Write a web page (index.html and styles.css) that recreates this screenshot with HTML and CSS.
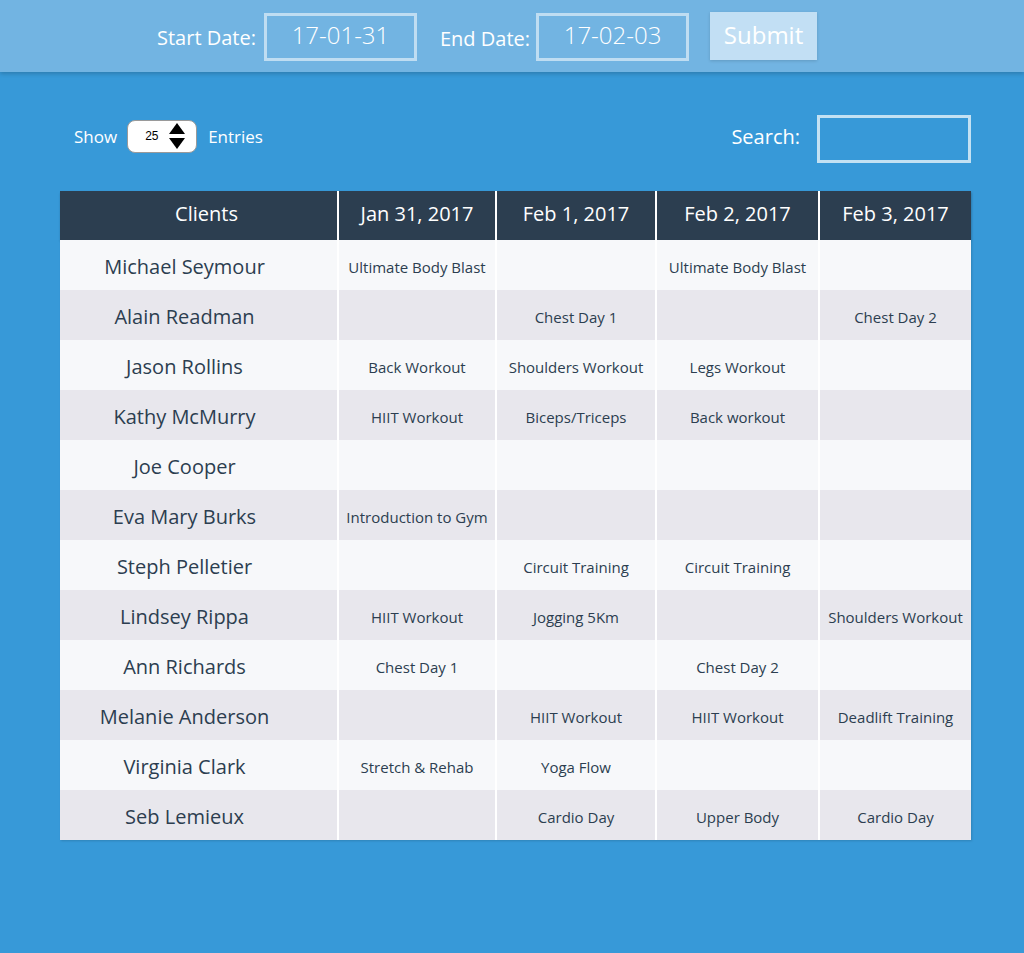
FILE: index.html
```html
<!DOCTYPE html>
<html>
<head>
<meta charset="utf-8">
<link rel="stylesheet" href="styles.css">
</head>
<body>
<header class="topbar">
  <label class="field-label">Start Date:</label>
  <div class="date-box">17-01-31</div>
  <label class="field-label end">End Date:</label>
  <div class="date-box">17-02-03</div>
  <button class="submit">Submit</button>
</header>
<main class="content">
  <div class="controls">
    <div class="show">
      <span>Show</span>
      <div class="select"><span class="num">25</span>
        <svg class="spin" width="16" height="26" viewBox="0 0 16 26"><polygon points="8,0 16,11 0,11" fill="#000"/><polygon points="0,15 16,15 8,26" fill="#000"/></svg>
      </div>
      <span>Entries</span>
    </div>
    <div class="search">
      <span class="search-label">Search:</span>
      <div class="search-box"></div>
    </div>
  </div>
  <table class="grid">
    <colgroup>
      <col class="w0"><col class="w1"><col class="w2"><col class="w3"><col class="w4">
    </colgroup>
    <thead>
      <tr><th class="c0">Clients</th><th>Jan 31, 2017</th><th>Feb 1, 2017</th><th>Feb 2, 2017</th><th>Feb 3, 2017</th></tr>
    </thead>
    <tbody>
      <tr><td class="name">Michael Seymour</td><td>Ultimate Body Blast</td><td></td><td>Ultimate Body Blast</td><td></td></tr>
      <tr><td class="name">Alain Readman</td><td></td><td>Chest Day 1</td><td></td><td>Chest Day 2</td></tr>
      <tr><td class="name">Jason Rollins</td><td>Back Workout</td><td>Shoulders Workout</td><td>Legs Workout</td><td></td></tr>
      <tr><td class="name">Kathy McMurry</td><td>HIIT Workout</td><td>Biceps/Triceps</td><td>Back workout</td><td></td></tr>
      <tr><td class="name">Joe Cooper</td><td></td><td></td><td></td><td></td></tr>
      <tr><td class="name">Eva Mary Burks</td><td>Introduction to Gym</td><td></td><td></td><td></td></tr>
      <tr><td class="name">Steph Pelletier</td><td></td><td>Circuit Training</td><td>Circuit Training</td><td></td></tr>
      <tr><td class="name">Lindsey Rippa</td><td>HIIT Workout</td><td>Jogging 5Km</td><td></td><td>Shoulders Workout</td></tr>
      <tr><td class="name">Ann Richards</td><td>Chest Day 1</td><td></td><td>Chest Day 2</td><td></td></tr>
      <tr><td class="name">Melanie Anderson</td><td></td><td>HIIT Workout</td><td>HIIT Workout</td><td>Deadlift Training</td></tr>
      <tr><td class="name">Virginia Clark</td><td>Stretch &amp; Rehab</td><td>Yoga Flow</td><td></td><td></td></tr>
      <tr><td class="name">Seb Lemieux</td><td></td><td>Cardio Day</td><td>Upper Body</td><td>Cardio Day</td></tr>
    </tbody>
  </table>
</main>
</body>
</html>
```
FILE: styles.css
```css
html, body {
  margin: 0;
  padding: 0;
}
body {
  background: #3799d8;
  font-family: "Open Sans", "Liberation Sans", sans-serif;
  width: 1024px;
  height: 953px;
  overflow: hidden;
}
.topbar {
  height: 72px;
  background: #72b4e2;
  box-shadow: 0 2px 4px rgba(0,0,0,0.18);
  display: flex;
  align-items: center;
  padding-left: 157px;
  box-sizing: border-box;
  position: relative;
}
.field-label {
  color: #fff;
  font-size: 20px;
  margin-right: 8px;
  padding-top: 2px;
}
.field-label.end {
  margin-left: 23px;
  margin-right: 6px;
  padding-top: 4px;
}
.date-box {
  width: 153px;
  height: 48px;
  box-sizing: border-box;
  border: 3px solid rgba(255,255,255,0.55);
  color: #fff;
  font-size: 24px;
  font-weight: 300;
  display: flex;
  align-items: center;
  justify-content: center;
  margin-top: 1px;
  padding-bottom: 4px;
}
.submit {
  margin-left: 21px;
  width: 107px;
  height: 48px;
  background: #c2dff4;
  border: none;
  color: #fff;
  font-family: inherit;
  font-size: 24px;
  box-shadow: 0 1px 3px rgba(0,0,0,0.15);
  margin-top: -1px;
  padding: 0 0 2px 0;
}
.content {
  padding: 43px 53px 0 60px;
}
.controls {
  display: flex;
  justify-content: space-between;
  align-items: center;
  height: 48px;
  padding-left: 14px;
}
.show {
  display: flex;
  align-items: center;
  color: #fff;
  font-size: 17px;
  margin-top: -6px;
}
.select {
  width: 70px;
  height: 33px;
  box-sizing: border-box;
  background: #fff;
  border: 1px solid #9a9a9a;
  border-radius: 8px;
  margin: 0 11px 0 10px;
  display: flex;
  align-items: center;
  padding-left: 17px;
}
.num {
  color: #000;
  font-size: 12px;
  font-family: "Liberation Sans", sans-serif;
  margin-right: 10px;
}
.spin {
  display: block;
}
.search {
  display: flex;
  align-items: center;
  color: #fff;
  font-size: 20px;
}
.search-label {
  padding-bottom: 5px;
}
.search-box {
  width: 154px;
  height: 48px;
  box-sizing: border-box;
  border: 3px solid rgba(255,255,255,0.7);
  margin-left: 17px;
}
.grid {
  margin-top: 28px;
  width: 911px;
  border-collapse: collapse;
  table-layout: fixed;
  box-shadow: 1px 1px 2px rgba(0,0,0,0.15);
}
.w0 { width: 278px; }
.w1 { width: 158px; }
.w2 { width: 160px; }
.w3 { width: 163px; }
.w4 { width: 152px; }
.grid th {
  background: #2c3e50;
  color: #fff;
  font-weight: 400;
  font-size: 20px;
  height: 49px;
  padding: 0 0 5px 0;
  box-sizing: border-box;
  border-left: 2px solid #fff;
  box-shadow: 0 2px 2px rgba(0,0,0,0.12);
}
.grid th.c0 { border-left: none; padding-left: 16px; }
.grid td {
  height: 50px;
  padding: 4px 0 0 0;
  text-align: center;
  font-size: 15px;
  color: #2c3e50;
  border-left: 2px solid #fff;
  box-sizing: border-box;
}
.grid td.name {
  border-left: none;
  font-size: 20px;
  padding: 2px 28px 0 0;
}
.grid tbody tr:nth-child(odd) td { background: #f7f8fa; }
.grid tbody tr:nth-child(even) td { background: #e8e7ed; }
```
